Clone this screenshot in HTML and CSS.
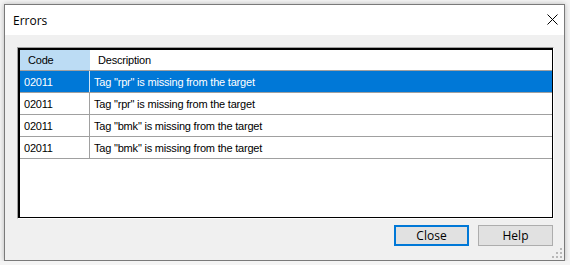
FILE: index.html
```html
<!DOCTYPE html>
<html lang="en">
<head>
    <meta charset="UTF-8">
    <title>Errors</title>
    <link rel="stylesheet" href="styles.css">
</head>
<body>
    <div class="window">
        <div class="titlebar">
            <span class="title">Errors</span>
            <svg class="close-x" width="11" height="11" viewBox="0 0 11 11">
                <path d="M0.5 0.5 L10.5 10.5 M10.5 0.5 L0.5 10.5" stroke="#000" stroke-width="1" fill="none"/>
            </svg>
        </div>
        <div class="content">
            <div class="list-outer">
                <div class="list">
                    <div class="row header">
                        <div class="cell code head-code">Code</div>
                        <div class="cell desc">Description</div>
                    </div>
                    <div class="row item selected">
                        <div class="cell code">02011</div>
                        <div class="cell desc">Tag "rpr" is missing from the target</div>
                    </div>
                    <div class="row item">
                        <div class="cell code">02011</div>
                        <div class="cell desc">Tag "rpr" is missing from the target</div>
                    </div>
                    <div class="row item">
                        <div class="cell code">02011</div>
                        <div class="cell desc">Tag "bmk" is missing from the target</div>
                    </div>
                    <div class="row item">
                        <div class="cell code">02011</div>
                        <div class="cell desc">Tag "bmk" is missing from the target</div>
                    </div>
                </div>
            </div>
            <div class="buttons">
                <button type="button" class="btn default">Close</button>
                <button type="button" class="btn">Help</button>
            </div>
            <svg class="grip" width="10" height="10" viewBox="0 0 10 10">
                <rect x="8" y="0" width="2" height="2" fill="#b8b8b8"/>
                <rect x="4" y="4" width="2" height="2" fill="#b8b8b8"/>
                <rect x="8" y="4" width="2" height="2" fill="#b8b8b8"/>
                <rect x="0" y="8" width="2" height="2" fill="#b8b8b8"/>
                <rect x="4" y="8" width="2" height="2" fill="#b8b8b8"/>
                <rect x="8" y="8" width="2" height="2" fill="#b8b8b8"/>
            </svg>
        </div>
    </div>
</body>
</html>
```

FILE: styles.css
```css
body {
    margin: 0;
    background-color: #f4f4f4;
    font-family: "Liberation Sans", Arial, sans-serif;
}

.window {
    margin: 4px 0 0 4px;
    width: 559px;
    height: 255px;
    border: 1px solid #7a7a7a;
    background-color: #f0f0f0;
    box-shadow: 0 0 5px rgba(0, 0, 0, 0.25);
    display: flex;
    flex-direction: column;
}

.titlebar {
    height: 30px;
    background-color: white;
    display: flex;
    align-items: center;
    justify-content: space-between;
    padding: 0 6px 0 8px;
}

.title {
    font-family: "Open Sans", "Noto Sans", sans-serif;
    font-size: 12px;
    color: #000;
}

.close-x {
    display: block;
    margin-top: -1px;
}

.content {
    flex: 1;
    padding: 12px 10px 0 12px;
    display: flex;
    flex-direction: column;
    position: relative;
}

.list-outer {
    height: 170px;
    border: 1px solid;
    border-color: #a0a0a0 #ffffff #ffffff #a0a0a0;
}

.list {
    height: 100%;
    box-sizing: border-box;
    background-color: white;
    border: 1px solid #000;
    border-top-width: 2px;
    border-left-width: 2px;
    padding: 0;
}

.row {
    display: flex;
    font-size: 11px;
    letter-spacing: -0.2px;
    color: #000;
}

.header {
    height: 20px;
    border-bottom: 1px solid #a0a0a0;
}

.header .cell {
    padding-left: 8px;
}

.head-code {
    background-color: #bcdcf4;
}

.item {
    height: 21px;
    border-bottom: 1px solid #a0a0a0;
}

.cell {
    display: flex;
    align-items: center;
    padding-left: 4px;
    box-sizing: border-box;
}

.code {
    width: 70px;
}

.item .code {
    border-right: 1px solid #a0a0a0;
}

.desc {
    flex: 1;
}

.selected {
    background-color: #0078d7;
    color: white;
}

.selected .code {
    border-right-color: #d0e4f5;
}

.buttons {
    display: flex;
    justify-content: flex-end;
    gap: 9px;
    margin-top: 6px;
    margin-right: 1px;
}

.btn {
    width: 75px;
    height: 21px;
    background-color: #e1e1e1;
    border: 1px solid #adadad;
    font-family: "Open Sans", "Noto Sans", sans-serif;
    font-size: 12px;
    color: #000;
    padding: 0;
}

.btn.default {
    border: 2px solid #0078d7;
}

.grip {
    position: absolute;
    right: 2px;
    bottom: 2px;
}
```
